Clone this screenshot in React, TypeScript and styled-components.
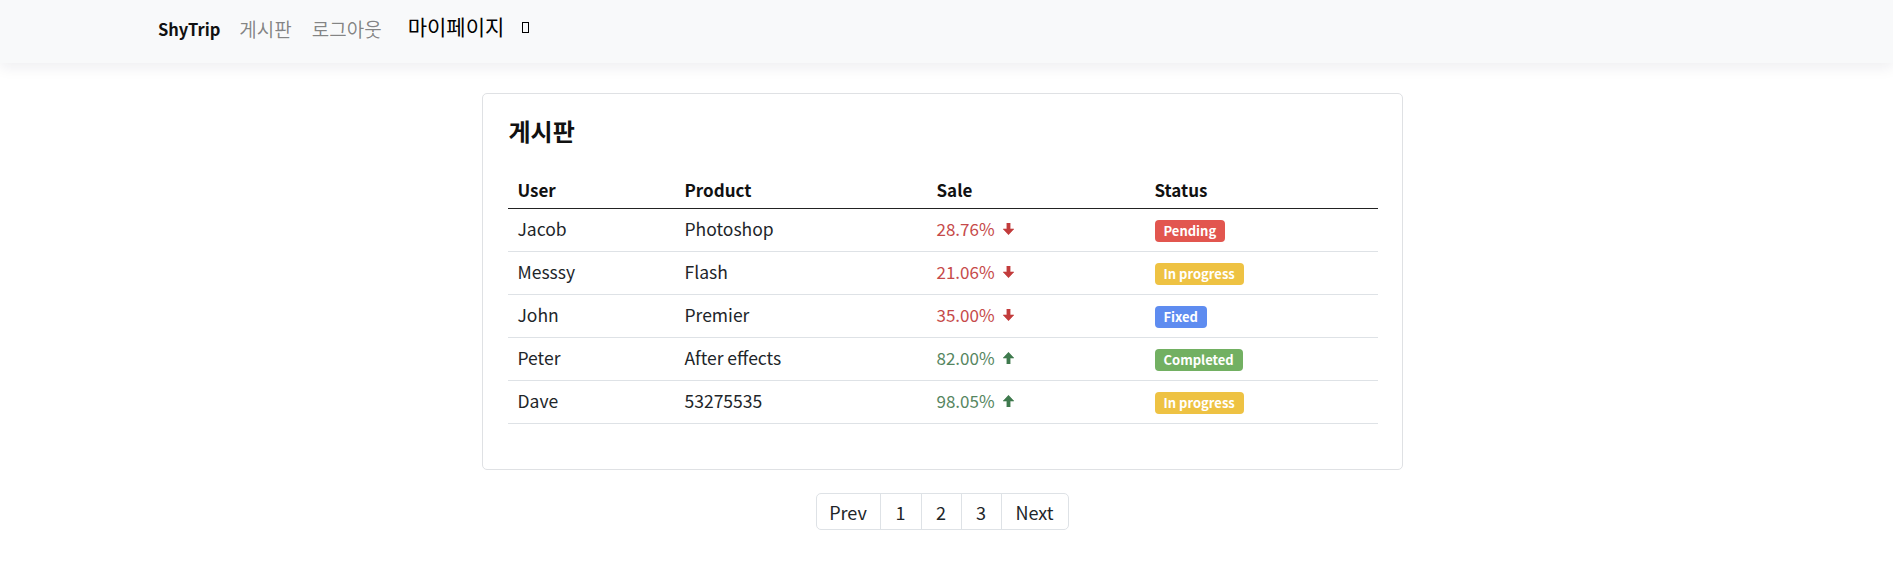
import React from "react";
import styled, { createGlobalStyle } from "styled-components";

const GlobalStyle = createGlobalStyle`
  html, body { margin: 0; padding: 0; background: #ffffff; }
  body {
    font-family: "Noto Sans CJK KR", "Noto Sans", sans-serif;
    color: #212529;
  }
  * { box-sizing: border-box; }
`;

const NavBar = styled.nav`
  height: 63px;
  background: #f8f9fa;
  box-shadow: 0 4px 14px rgba(20, 20, 60, 0.08);
  display: flex;
  align-items: center;
  padding: 0 0 6px 158px;
`;

const Brand = styled.span`
  font-size: 16.5px;
  font-weight: 700;
  color: #111;
  margin-right: 19px;
`;

const NavLink = styled.span<{ $gap: number }>`
  font-size: 19px;
  color: rgba(0, 0, 0, 0.48);
  margin-right: ${(p) => p.$gap}px;
`;

const MyPage = styled.span`
  font-size: 21px;
  color: #000;
  margin-right: 18px;
  margin-top: -5px;
`;

const Tofu = styled.span`
  display: inline-block;
  width: 7px;
  height: 11px;
  border: 1.5px solid #000;
  margin-top: -2px;
`;

const Main = styled.main`
  width: 921px;
  margin: 30px 0 0 calc(50% - 465px);
  display: flex;
  flex-direction: column;
  align-items: center;
`;

const Card = styled.section`
  width: 100%;
  border: 1px solid #dfe1e4;
  border-radius: 5px;
  padding: 23px 24px 24px 25px;
`;

const Title = styled.h2`
  margin: 0 0 27px 1px;
  font-size: 24px;
  line-height: 1.2;
  font-weight: 700;
  color: #111;
`;

const Table = styled.table`
  width: 870px;
  border-collapse: collapse;
  table-layout: fixed;
  margin-bottom: 21px;
`;

const HeadCell = styled.th`
  text-align: left;
  font-size: 17px;
  font-weight: 700;
  color: #111;
  height: 36px;
  padding: 0 10px 3px;
  border-bottom: 1px solid #222;
`;

const Cell = styled.td`
  font-size: 17.5px;
  color: #212529;
  height: 43px;
  padding: 0 10px 3px;
  border-bottom: 1px solid #dee2e6;
`;

const SaleWrap = styled.span<{ $up: boolean }>`
  display: inline-flex;
  align-items: center;
  gap: 8px;
  font-size: 17px;
  color: ${(p) => (p.$up ? "#56865f" : "#c64a4a")};
`;

const Badge = styled.span<{ $bg: string }>`
  display: inline-flex;
  align-items: center;
  height: 22px;
  padding: 0 9px;
  border-radius: 4px;
  background: ${(p) => p.$bg};
  color: #fff;
  font-size: 13px;
  font-weight: 700;
  margin-top: 3px;
`;

const Pager = styled.ul`
  list-style: none;
  display: flex;
  margin: 23px 0 0;
  padding: 0;
  border: 1px solid #dee2e6;
  border-radius: 5px;
  overflow: hidden;
`;

const PageItem = styled.li<{ $w: number; $first?: boolean }>`
  width: ${(p) => p.$w}px;
  height: 35px;
  display: flex;
  align-items: center;
  justify-content: center;
  font-size: 18px;
  color: #212529;
  border-left: ${(p) => (p.$first ? "none" : "1px solid #dee2e6")};
`;

const Arrow = ({ up }: { up: boolean }) => (
  <svg width="11" height="12" viewBox="0 0 11 12" aria-hidden="true">
    <path
      d={
        up
          ? "M3.9 12 H7.1 V6 H10.8 L5.5 0.3 L0.2 6 H3.9 Z"
          : "M3.9 0 H7.1 V6 H10.8 L5.5 11.7 L0.2 6 H3.9 Z"
      }
      fill={up ? "#3f7a4e" : "#c23c3c"}
      stroke={up ? "#3f7a4e" : "#c23c3c"}
      strokeWidth="0.6"
      strokeLinejoin="round"
    />
  </svg>
);

const rows = [
  { user: "Jacob", product: "Photoshop", sale: "28.76%", up: false, status: "Pending", color: "#e2564f" },
  { user: "Messsy", product: "Flash", sale: "21.06%", up: false, status: "In progress", color: "#eec243" },
  { user: "John", product: "Premier", sale: "35.00%", up: false, status: "Fixed", color: "#5e8cf0" },
  { user: "Peter", product: "After effects", sale: "82.00%", up: true, status: "Completed", color: "#72b062" },
  { user: "Dave", product: "53275535", sale: "98.05%", up: true, status: "In progress", color: "#eec243" },
];

const pages = [
  { label: "Prev", w: 63 },
  { label: "1", w: 41 },
  { label: "2", w: 40 },
  { label: "3", w: 40 },
  { label: "Next", w: 67 },
];

export default function App() {
  return (
    <>
      <GlobalStyle />
      <NavBar>
        <Brand>ShyTrip</Brand>
        <NavLink $gap={20}>게시판</NavLink>
        <NavLink $gap={26}>로그아웃</NavLink>
        <MyPage>마이페이지</MyPage>
        <Tofu />
      </NavBar>
      <Main>
        <Card>
          <Title>게시판</Title>
          <Table>
            <colgroup>
              <col style={{ width: 167 }} />
              <col style={{ width: 252 }} />
              <col style={{ width: 218 }} />
              <col style={{ width: 233 }} />
            </colgroup>
            <thead>
              <tr>
                <HeadCell>User</HeadCell>
                <HeadCell>Product</HeadCell>
                <HeadCell>Sale</HeadCell>
                <HeadCell>Status</HeadCell>
              </tr>
            </thead>
            <tbody>
              {rows.map((r) => (
                <tr key={r.user}>
                  <Cell>{r.user}</Cell>
                  <Cell>{r.product}</Cell>
                  <Cell>
                    <SaleWrap $up={r.up}>
                      {r.sale}
                      <Arrow up={r.up} />
                    </SaleWrap>
                  </Cell>
                  <Cell>
                    <Badge $bg={r.color}>{r.status}</Badge>
                  </Cell>
                </tr>
              ))}
            </tbody>
          </Table>
        </Card>
        <Pager>
          {pages.map((p, i) => (
            <PageItem key={p.label} $w={p.w} $first={i === 0}>
              {p.label}
            </PageItem>
          ))}
        </Pager>
      </Main>
    </>
  );
}
